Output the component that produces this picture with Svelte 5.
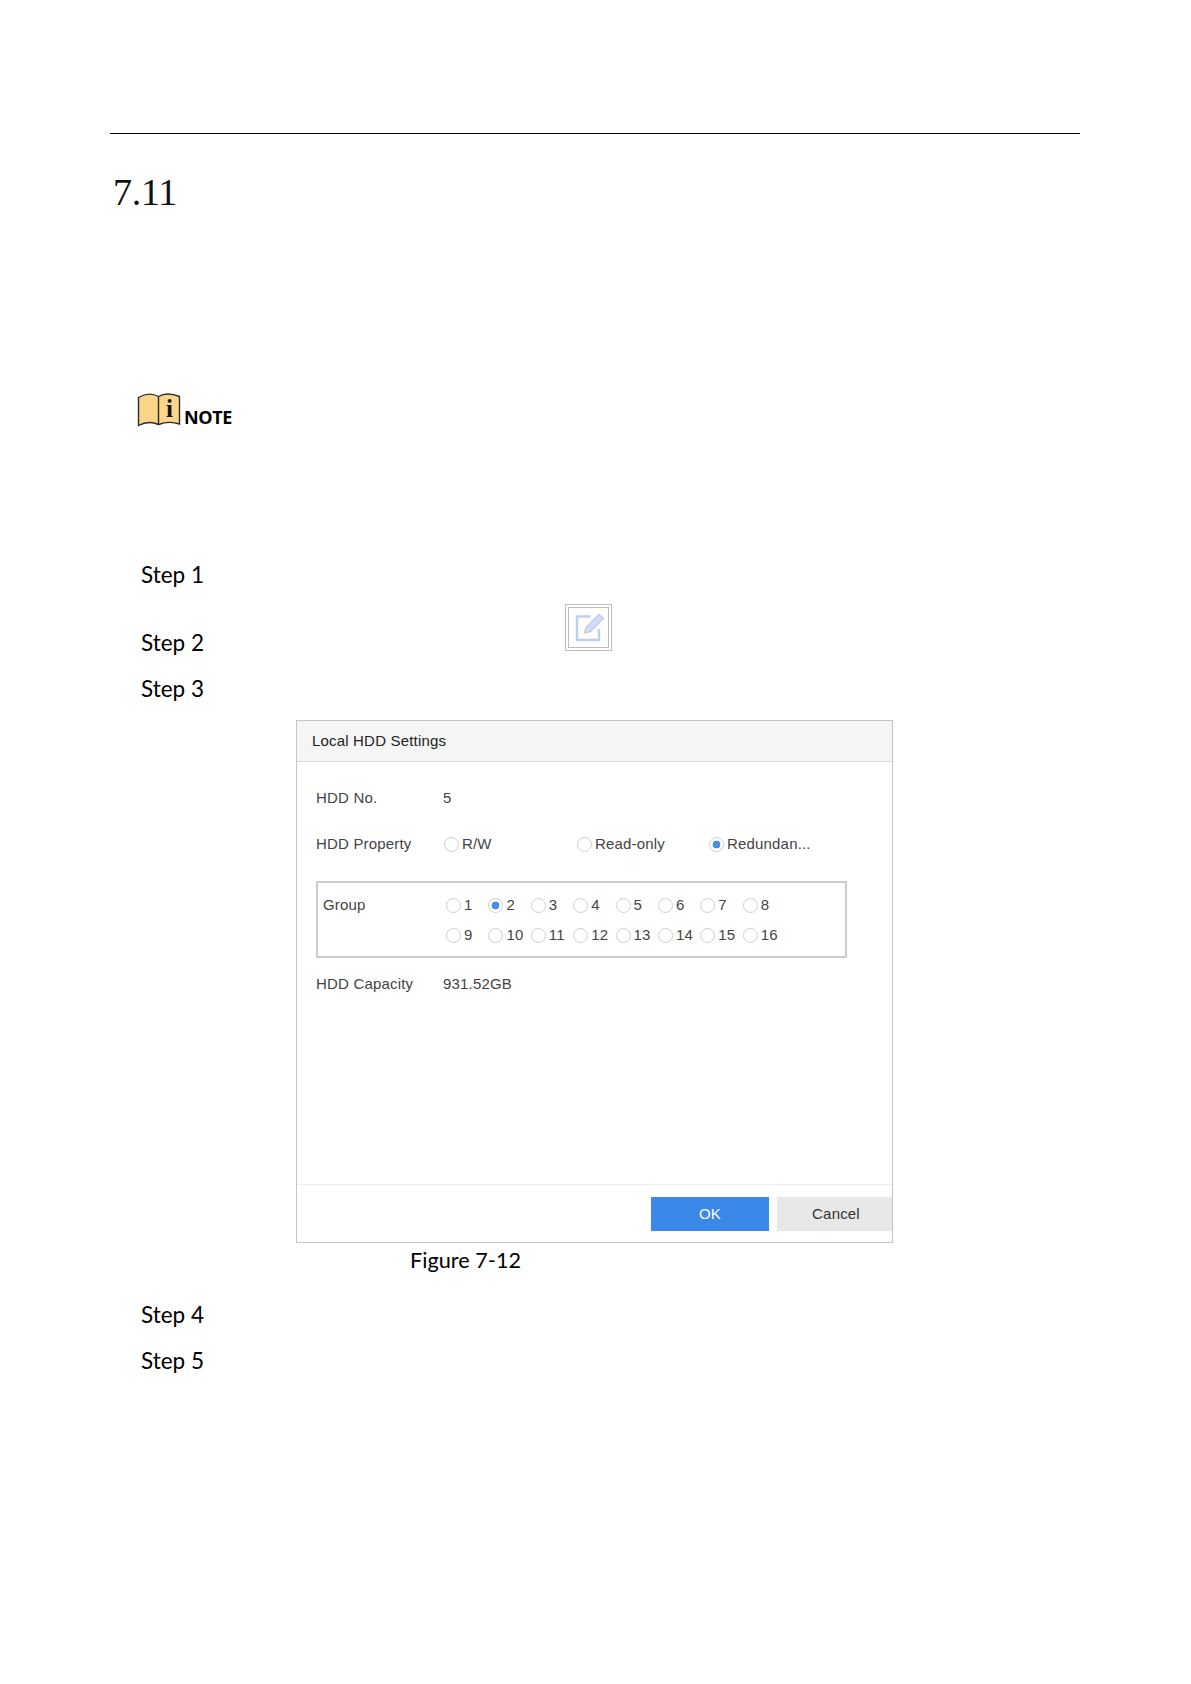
<script>
	const groupNos = Array.from({ length: 16 }, (_, i) => i + 1);
</script>

<main class="page">
	<div class="rule"></div>
	<h2 class="title">7.11</h2>

	<div class="note">
		<svg class="book" viewBox="0 0 44 36" width="44" height="36" aria-hidden="true">
			<path
				d="M1.5 6.5 C8 2.5 15 2 21.5 5.5 C28 1.5 35 2.5 42.5 5.5 V33 C35 30.5 28 31 21.5 33.5 C15 30.5 8 31 1.5 34.5 Z"
				fill="#fbd588"
				stroke="#2b2b2b"
				stroke-width="1.4"
			/>
			<path d="M21.5 5.5 V33.5" stroke="#2b2b2b" stroke-width="1.4" />
			<text x="32.5" y="26" class="book-i">i</text>
		</svg>
		<span class="note-label">NOTE</span>
	</div>

	<p class="step step1">Step 1</p>
	<div class="step step2">
		<span>Step 2</span>
		<span class="edit-box">
			<svg viewBox="0 0 30 30" width="30" height="30" aria-hidden="true">
				<path d="M16.5 3.5 H3 V27 H25 V16" fill="none" stroke="#bcd0f0" stroke-width="2.4" />
				<path d="M10.5 20 L12 14.5 L25 1.5 L29.5 5.5 L16 19 Z" fill="#d3dcf3" stroke="#bccbeb" stroke-width="1.3" />
			</svg>
		</span>
	</div>
	<p class="step step3">Step 3</p>

	<section class="dialog">
		<header class="dialog-head">Local HDD Settings</header>
		<div class="dialog-body">
			<div class="row no-row">
				<span class="label">HDD No.</span>
				<span>5</span>
			</div>
			<div class="row prop-row">
				<span class="label">HDD Property</span>
				<div class="props">
					<span class="opt"><i class="radio"></i>R/W</span>
					<span class="opt"><i class="radio"></i>Read-only</span>
					<span class="opt"><i class="radio on"></i>Redundan...</span>
				</div>
			</div>
			<div class="group">
				<span class="group-label">Group</span>
				<div class="group-grid">
					{#each groupNos as n}
						<span class="opt"><i class="radio" class:on={n === 2}></i>{n}</span>
					{/each}
				</div>
			</div>
			<div class="row cap-row">
				<span class="label">HDD Capacity</span>
				<span>931.52GB</span>
			</div>
		</div>
		<footer class="dialog-foot">
			<button class="ok">OK</button>
			<button class="cancel">Cancel</button>
		</footer>
	</section>

	<p class="caption">Figure 7-12</p>
	<p class="step step4">Step 4</p>
	<p class="step step5">Step 5</p>
</main>

<style>
	:global(body) {
		margin: 0;
		background: #fff;
		color: #000;
	}
	.page {
		width: 1191px;
		height: 1684px;
		box-sizing: border-box;
		padding: 133px 111px 0 110px;
		overflow: hidden;
	}
	.rule {
		border-top: 1px solid #000;
	}
	.title {
		margin: 36px 0 0 3px;
		font: 400 38px/44px 'Liberation Serif', serif;
		color: #111;
		letter-spacing: -0.3px;
	}
	.note {
		display: flex;
		align-items: flex-end;
		margin: 178px 0 0 27px;
		height: 36px;
	}
	.book {
		margin-bottom: 1px;
	}
	.book-i {
		font: 700 25px 'Liberation Serif', serif;
		text-anchor: middle;
		fill: #111;
	}
	.note-label {
		font: 700 18px/22px 'Open Sans', sans-serif;
		margin-left: 3px;
		letter-spacing: -0.4px;
	}
	.step {
		margin: 0 0 0 31px;
		font: 400 22.5px/30px Lato, sans-serif;
		color: #000;
	}
	.step1 {
		margin-top: 132px;
	}
	.step2 {
		display: flex;
		align-items: flex-end;
		margin-top: 14px;
	}
	.edit-box {
		display: flex;
		align-items: center;
		justify-content: center;
		box-sizing: border-box;
		width: 47px;
		height: 47px;
		margin: 0 0 7px 361px;
		border: 1px solid #bdbdbd;
		outline: 1px solid #bdbdbd;
		outline-offset: -4px;
	}
	.step3 {
		margin-top: 16px;
	}
	.dialog {
		box-sizing: border-box;
		width: 597px;
		height: 523px;
		margin: 16px 0 0 186px;
		display: flex;
		flex-direction: column;
		border: 1.5px solid #c4c4c4;
		font: 400 15px/20px 'Liberation Sans', sans-serif;
		letter-spacing: 0.18px;
		color: #444;
	}
	.dialog-head {
		height: 41px;
		box-sizing: border-box;
		padding: 10px 15px;
		background: #f5f5f5;
		border-bottom: 1px solid #dcdcdc;
		color: #222;
	}
	.dialog-body {
		flex: 1;
		padding: 0 0 0 19px;
	}
	.row {
		display: flex;
		align-items: center;
	}
	.label {
		width: 127px;
		flex: none;
	}
	.no-row {
		margin-top: 26px;
	}
	.prop-row {
		margin-top: 26px;
	}
	.props {
		display: grid;
		grid-template-columns: 133px 132px auto;
		margin-left: 1px;
	}
	.opt {
		display: flex;
		align-items: center;
		gap: 3px;
		white-space: nowrap;
	}
	.radio {
		display: block;
		box-sizing: border-box;
		width: 15px;
		height: 15px;
		flex: none;
		border: 1px solid #cfcfcf;
		border-radius: 50%;
		background: #fff;
	}
	.radio.on {
		background: radial-gradient(circle, #4a8be8 0 3.6px, #fff 4.2px);
	}
	.group {
		box-sizing: border-box;
		display: flex;
		width: 531px;
		height: 77px;
		margin-top: 27px;
		padding: 12px 0 0 5px;
		border: 2px solid #ccc;
	}
	.group-label {
		width: 123px;
		flex: none;
	}
	.group-grid {
		display: grid;
		grid-template-columns: repeat(8, 42.4px);
		grid-auto-rows: 20px;
		row-gap: 10px;
	}
	.cap-row {
		margin-top: 16px;
	}
	.dialog-foot {
		height: 58px;
		box-sizing: border-box;
		padding-top: 12px;
		display: flex;
		justify-content: flex-end;
		gap: 8px;
		border-top: 1px solid #eee;
		align-items: flex-start;
	}
	.dialog-foot button {
		height: 34px;
		border: 0;
		padding: 0;
		font: inherit;
		letter-spacing: inherit;
	}
	.ok {
		width: 118px;
		background: #3a88e8;
		color: #fff;
	}
	.dialog-foot .cancel {
		width: 115px;
		padding-left: 3px;
		background: #e8e8e8;
		color: #333;
	}
	.caption {
		margin: 2px 0 0 300px;
		font: 400 21.7px/30px Lato, sans-serif;
		color: #000;
	}
	.step4 {
		margin-top: 25px;
	}
	.step5 {
		margin-top: 16px;
	}
</style>
